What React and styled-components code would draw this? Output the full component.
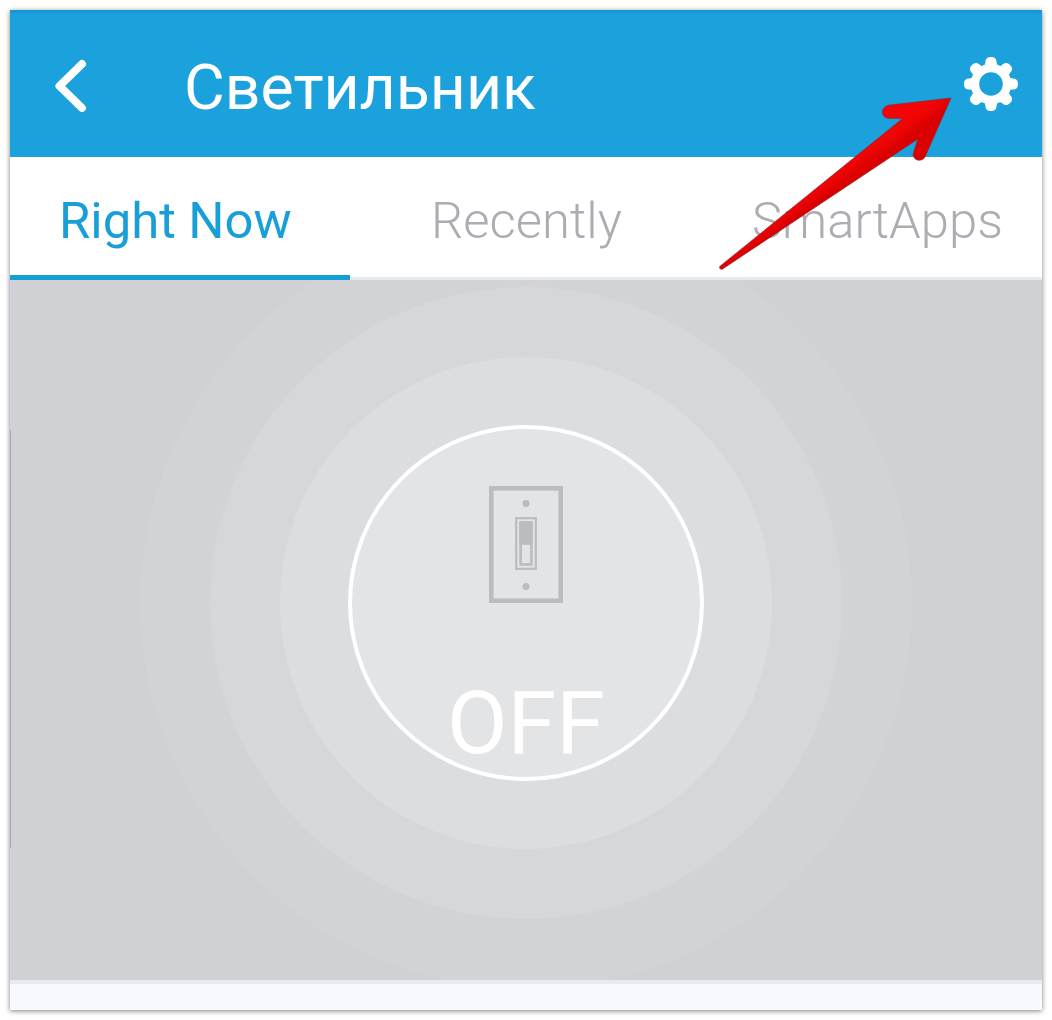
import React from "react";
import styled, { createGlobalStyle } from "styled-components";

const GlobalStyle = createGlobalStyle`
  * { box-sizing: border-box; }
  body { margin: 0; background: #fff; font-family: Roboto, sans-serif; }
`;

const Page = styled.div`
  position: relative;
  width: 1052px;
  height: 1020px;
  padding: 10px;
  background: #fff;
  overflow: hidden;
`;

const Screen = styled.main`
  height: 1000px;
  display: flex;
  flex-direction: column;
  box-shadow: 0 1px 5px rgba(0, 0, 0, 0.5);
`;

const Header = styled.header`
  display: flex;
  align-items: center;
  height: 147px;
  padding: 3px 23px 0 45px;
  background: #1ba1db;
  border-top: 3px solid #1996d3;
  border-bottom: 1px solid #2ba0d4;
`;

const IconButton = styled.button`
  display: flex;
  padding: 0 0 ${(p) => p.$lift || 0}px;
  border: 0;
  background: none;
`;

const Title = styled.h1`
  flex: 1;
  margin: 3px 0 0 97px;
  color: #fff;
  font-size: 62.6px;
  font-weight: 400;
  line-height: 74px;
  white-space: nowrap;
`;

const Tabs = styled.nav`
  display: flex;
  height: 123px;
  background: #fff;
`;

const Tab = styled.button`
  flex: 0 0 ${(p) => p.$width}px;
  padding: ${(p) => (p.$active ? "9px" : "7px")} 0 0 ${(p) => p.$inset}px;
  border: 0;
  border-bottom: ${(p) => (p.$active ? "5px solid #149ed6" : "3px solid #e9eaf0")};
  background: none;
  color: ${(p) => (p.$active ? "#189fd8" : "#acacb2")};
  font: ${(p) => (p.$active ? 400 : 300)} 50.8px/60px Roboto, sans-serif;
  text-align: left;
  white-space: nowrap;
`;

const Panel = styled.section`
  display: flex;
  align-items: center;
  justify-content: center;
  height: 700px;
  padding-bottom: 54px;
  background: #d0d1d5;
  overflow: hidden;
`;

const Ring = styled.div`
  display: flex;
  flex: none;
  align-items: center;
  justify-content: center;
  width: ${(p) => p.$size}px;
  height: ${(p) => p.$size}px;
  border-radius: 50%;
  background: ${(p) => p.$tone};
`;

const Toggle = styled.button`
  display: flex;
  flex: none;
  flex-direction: column;
  align-items: center;
  width: 356px;
  height: 356px;
  padding: 57px 0 0;
  border: 4px solid #fff;
  border-radius: 50%;
  background: #e3e4e6;
`;

const ToggleLabel = styled.span`
  margin-top: 67px;
  color: #fff;
  font: 400 88px/104px Roboto, sans-serif;
`;

const Footer = styled.footer`
  flex: 1;
  border-top: 4px solid #e9eaee;
  background: #f8f9fe;
`;

const Pointer = styled.svg`
  position: absolute;
  left: 710px;
  top: 90px;
`;

const EdgeLine = styled.div`
  position: absolute;
  left: 10px;
  top: 430px;
  width: 1px;
  height: 418px;
  background: #acacae;
`;

function BackIcon() {
  return (
    <svg width="32" height="54" viewBox="0 0 32 54" fill="none">
      <path d="M27 5 L4.5 27 L27 49" stroke="#fff" strokeWidth="8" strokeLinecap="round" strokeLinejoin="round" />
    </svg>
  );
}

function GearIcon() {
  return (
    <svg width="56" height="56" viewBox="-28 -28 56 56">
      <circle r="16" fill="none" stroke="#fff" strokeWidth="8.4" />
      {[0, 45, 90, 135, 180, 225, 270, 315].map((angle) => (
        <path
          key={angle}
          transform={`rotate(${angle})`}
          fill="#fff"
          d="M-8 -17 Q-5.6 -19 -5.6 -21.5 C-5.6 -25.4 -3.6 -27 0 -27 C3.6 -27 5.6 -25.4 5.6 -21.5 Q5.6 -19 8 -17 Z"
        />
      ))}
    </svg>
  );
}

function SwitchIcon() {
  return (
    <svg width="74" height="118" viewBox="0 0 74 118" fill="none" stroke="#bbbcbe">
      <rect x="2.3" y="2.3" width="69.4" height="112.4" strokeWidth="4.6" />
      <rect x="27.2" y="32.2" width="19.6" height="50.6" strokeWidth="2.2" />
      <rect x="31.6" y="36.6" width="10.8" height="41.8" strokeWidth="2.6" />
      <path d="M30.3 35.3h13.4v23.5H30.3z" fill="#bbbcbe" stroke="none" />
      <circle cx="37" cy="17.6" r="3.5" fill="#bbbcbe" stroke="none" />
      <circle cx="37" cy="100.5" r="3.5" fill="#bbbcbe" stroke="none" />
    </svg>
  );
}

function ArrowPointer() {
  return (
    <Pointer width="250" height="190" viewBox="710 90 250 190">
      <defs>
        <linearGradient id="arrowRed" gradientUnits="userSpaceOnUse" x1="904" y1="112" x2="922" y2="137">
          <stop offset="0" stopColor="#f40505" />
          <stop offset="0.42" stopColor="#ef0404" />
          <stop offset="0.75" stopColor="#d90000" />
          <stop offset="1" stopColor="#dc0000" />
        </linearGradient>
      </defs>
      <path
        fill="url(#arrowRed)"
        stroke="#8b2733"
        strokeWidth="0.7"
        d="M951 98 L889 105.2 C880 106.5 880.5 118.2 889 118.3 L902.5 118.6 L719.7 266.5 Q719 269.8 722.2 269.2 L917.8 139 L913.4 153.2 C911.8 160.7 922.5 162.8 925.2 156.5 Z"
      />
    </Pointer>
  );
}

export default function App() {
  return (
    <>
      <GlobalStyle />
      <Page>
        <Screen>
          <Header>
            <IconButton aria-label="Back"><BackIcon /></IconButton>
            <Title>Светильник</Title>
            <IconButton aria-label="Settings" $lift={4}><GearIcon /></IconButton>
          </Header>
          <Tabs>
            <Tab $active $width={340} $inset={49}>Right Now</Tab>
            <Tab $width={352} $inset={81}>Recently</Tab>
            <Tab $width={340} $inset={50}>SmartApps</Tab>
          </Tabs>
          <Panel>
            <Ring $size={772} $tone="#d2d3d7">
              <Ring $size={632} $tone="#d6d7db">
                <Ring $size={492} $tone="#dcdde1">
                  <Toggle>
                    <SwitchIcon />
                    <ToggleLabel>OFF</ToggleLabel>
                  </Toggle>
                </Ring>
              </Ring>
            </Ring>
          </Panel>
          <Footer />
        </Screen>
        <EdgeLine />
        <ArrowPointer />
      </Page>
    </>
  );
}
